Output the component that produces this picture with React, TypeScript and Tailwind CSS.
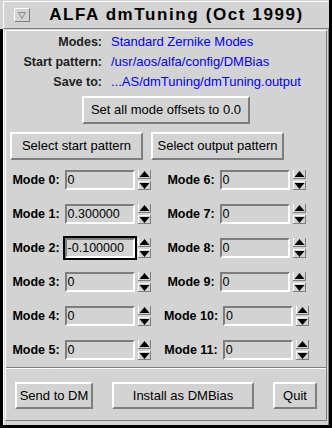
import React from 'react'

const DARK = '#7d7d7d'

const LEFT_MODES = [0, 1, 2, 3, 4, 5]
const RIGHT_MODES = [6, 7, 8, 9, 10, 11]
const VALUES: Record<number, string> = { 1: '0.300000', 2: '-0.100000' }

function Arrow({ dir }: { dir: 'up' | 'down' }) {
  return (
    <svg width="13" height="9" viewBox="0 0 13 9" className="block">
      <rect x="0" y="0" width="13" height="9" fill="#d3d3d3" />
      {dir === 'down' && <rect x="0" y="0" width="13" height="1" fill="#fff" />}
      <rect x="0" y="0" width="1" height="9" fill="#fff" />
      <rect x="0" y="8" width="13" height="1" fill={DARK} />
      <rect x="12" y="0" width="1" height="9" fill={DARK} />
      {dir === 'up' ? (
        <polygon points="6.5,1 1.5,7 11.5,7" fill="#000" />
      ) : (
        <polygon points="1.5,2 11.5,2 6.5,8" fill="#000" />
      )}
    </svg>
  )
}

function Field({ value, focused }: { value: string; focused?: boolean }) {
  return (
    <div className={`border-2 ${focused ? 'border-black' : 'border-transparent'}`}>
      <div className="w-[70px] h-[20px] flex items-center border-2 border-t-[#7d7d7d] border-l-[#7d7d7d] border-r-white border-b-white pl-[1px] text-[12.5px] leading-none">
        {value}
      </div>
    </div>
  )
}

function ModeRow({ n }: { n: number }) {
  return (
    <div className="h-[34px] flex items-center justify-center">
      <span className="font-bold text-[12.5px] mr-[3px]">Mode {n}:</span>
      <Field value={VALUES[n] ?? '0'} focused={n === 2} />
      <div className="ml-[1px] flex flex-col gap-[2px]">
        <Arrow dir="up" />
        <Arrow dir="down" />
      </div>
    </div>
  )
}

function PushButton({ children, className }: { children: React.ReactNode; className: string }) {
  return (
    <button
      className={`flex items-center justify-center border-2 border-t-white border-l-white border-r-[#7d7d7d] border-b-[#7d7d7d] bg-[#d3d3d3] text-[13px] text-black ${className}`}
    >
      {children}
    </button>
  )
}

export default function App() {
  return (
    <div className="w-[332px] h-[428px] bg-black flex flex-col overflow-hidden font-['Liberation_Sans',Arial,sans-serif] text-black">
      {/* title bar */}
      <div className="w-[329px] h-[29px] shrink-0 bg-[#d3d3d3] pl-[3px] pt-[1px]">
        <div className="h-[28px] flex items-center border-l border-t border-b border-l-white border-t-white border-b-[#7d7d7d]">
          <div className="ml-[10px] w-[16px] h-[14px] flex items-center justify-center border border-t-white border-l-white border-r-[#7d7d7d] border-b-[#7d7d7d]">
            <svg width="8" height="7" viewBox="0 0 8 7">
              <polygon points="0.5,0.5 7.5,0.5 4,6.5" fill="none" stroke="#8a8a8a" strokeWidth="1" />
            </svg>
          </div>
          <div className="flex-1 text-center text-[17px] font-bold tracking-[1.6px] pr-[6px]">
            ALFA dmTuning (Oct 1999)
          </div>
        </div>
      </div>

      {/* window body */}
      <div className="ml-[3px] w-[326px] flex-1 mb-[3px] bg-[#d3d3d3] border-l border-l-white border-r border-r-[#7d7d7d] pl-[1px] pr-[1px] pt-[1px] pb-[4px] flex flex-col">
        <div className="flex-1 flex flex-col border border-t-white border-l-white border-r-[#7d7d7d] border-b-[#7d7d7d]">
          <div className="pt-[1px]">
            {[
              ['Modes:', 'Standard Zernike Modes'],
              ['Start pattern:', '/usr/aos/alfa/config/DMBias'],
              ['Save to:', '...AS/dmTuning/dmTuning.output'],
            ].map(([label, value]) => (
              <div key={label} className="h-[20px] flex items-center">
                <span className="w-[96px] text-right font-bold text-[12.5px] text-[#222]">{label}</span>
                <span className="ml-[9px] text-[13px] text-[#0000ff]">{value}</span>
              </div>
            ))}
          </div>

          <div className="mt-[4px] flex justify-center">
            <PushButton className="w-[168px] h-[28px]">Set all mode offsets to 0.0</PushButton>
          </div>

          <div className="mt-[8px] pl-[4px] flex gap-[8px]">
            <PushButton className="w-[133px] h-[28px]">Select start pattern</PushButton>
            <PushButton className="w-[133px] h-[28px]">Select output pattern</PushButton>
          </div>

          <div className="mt-[3px] grid grid-cols-[151px_159px]">
            <div className="flex flex-col">
              {LEFT_MODES.map(n => (
                <ModeRow key={n} n={n} />
              ))}
            </div>
            <div className="flex flex-col">
              {RIGHT_MODES.map(n => (
                <ModeRow key={n} n={n} />
              ))}
            </div>
          </div>

          <div className="border-t border-t-[#7d7d7d] border-b border-b-white" />

          <div className="flex-1 flex items-start justify-between px-[9px] pt-[13px]">
            <PushButton className="w-[78px] h-[27px]">Send to DM</PushButton>
            <PushButton className="w-[142px] h-[27px]">Install as DMBias</PushButton>
            <PushButton className="w-[44px] h-[27px]">Quit</PushButton>
          </div>
        </div>
      </div>
    </div>
  )
}
